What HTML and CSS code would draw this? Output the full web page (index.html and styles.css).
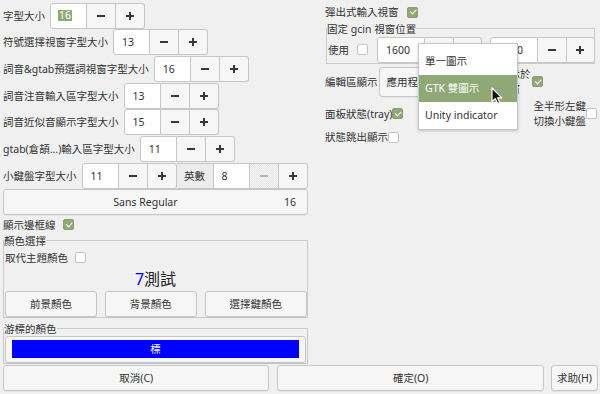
FILE: index.html
```html
<!DOCTYPE html>
<html lang="zh-Hant">

<head>
    <meta charset="UTF-8">
    <meta name="viewport" content="width=device-width, initial-scale=1.0">
    <title>gcin 外觀設定</title>
    <link rel="stylesheet" href="styles.css">
</head>

<body>
    <div class="win">
        <div class="top">
            <div class="left">
                <div class="row"><span class="lbl">字型大小</span>
                    <div class="spin"><div class="entry"><span class="sel">16</span></div><div class="sbtn minus"></div><div class="sbtn plus"></div></div>
                </div>
                <div class="row"><span class="lbl">符號選擇視窗字型大小</span>
                    <div class="spin"><div class="entry">13</div><div class="sbtn minus"></div><div class="sbtn plus"></div></div>
                </div>
                <div class="row"><span class="lbl">詞音&amp;gtab預選詞視窗字型大小</span>
                    <div class="spin"><div class="entry">16</div><div class="sbtn minus"></div><div class="sbtn plus"></div></div>
                </div>
                <div class="row"><span class="lbl">詞音注音輸入區字型大小</span>
                    <div class="spin"><div class="entry">13</div><div class="sbtn minus"></div><div class="sbtn plus"></div></div>
                </div>
                <div class="row"><span class="lbl">詞音近似音顯示字型大小</span>
                    <div class="spin"><div class="entry">15</div><div class="sbtn minus"></div><div class="sbtn plus"></div></div>
                </div>
                <div class="row"><span class="lbl">gtab(倉頡...)輸入區字型大小</span>
                    <div class="spin"><div class="entry">11</div><div class="sbtn minus"></div><div class="sbtn plus"></div></div>
                </div>
                <div class="row"><span class="lbl">小鍵盤字型大小</span>
                    <div class="spin"><div class="entry">11</div><div class="sbtn minus"></div><div class="sbtn plus"></div></div>
                    <div class="tag">英數</div>
                    <div class="spin glued"><div class="entry">8</div><div class="sbtn minus off"></div><div class="sbtn plus"></div></div>
                </div>
                <div class="btn fontbtn"><span class="fname">Sans Regular</span><span class="fsize">16</span></div>
                <div class="check border-row"><span>顯示邊框線</span><span class="chk on"></span></div>

                <fieldset class="frame colors">
                    <legend>顏色選擇</legend>
                    <div class="check theme-row"><span>取代主題顏色</span><span class="chk"></span></div>
                    <div class="sample"><span class="key">7</span>測試</div>
                    <div class="btnrow">
                        <div class="btn">前景顏色</div>
                        <div class="btn">背景顏色</div>
                        <div class="btn">選擇鍵顏色</div>
                    </div>
                </fieldset>

                <fieldset class="frame cursor">
                    <legend>游標的顏色</legend>
                    <div class="btn cursorbtn"><div class="swatch">標</div></div>
                </fieldset>
            </div>

            <div class="right">
                <div class="check popup-row"><span>彈出式輸入視窗</span><span class="chk on"></span></div>

                <fieldset class="frame fixpos">
                    <legend>固定 gcin 視窗位置</legend>
                    <div class="posrow">
                        <span class="use">使用</span><span class="chk"></span>
                        <div class="spin wide"><div class="entry">1600</div><div class="sbtn minus"></div><div class="sbtn plus"></div></div>
                        <div class="spin wide"><div class="entry">1000</div><div class="sbtn minus"></div><div class="sbtn plus"></div></div>
                    </div>
                </fieldset>

                <div class="editrow">
                    <span>編輯區顯示</span>
                    <div class="btn combo">應用程式內</div>
                    <span class="two">游標處顯示於<br>輸入法視窗</span>
                    <span class="chk on"></span>
                </div>

                <div class="trayrow">
                    <div class="check tight"><span>面板狀態(tray)</span><span class="chk on"></span></div>
                    <div class="check tight"><span class="two lines15">全半形左鍵<br>切換小鍵盤</span><span class="chk"></span></div>
                </div>
                <div class="check tight status-row"><span>狀態跳出顯示</span><span class="chk"></span></div>
            </div>
        </div>

        <div class="actions">
            <div class="btn grow">取消(C)</div>
            <div class="btn grow">確定(O)</div>
            <div class="btn help">求助(H)</div>
        </div>

        <div class="menu">
            <div class="item">單一圖示</div>
            <div class="item active">GTK 雙圖示</div>
            <div class="item">Unity indicator</div>
        </div>

        <svg class="pointer" width="13" height="18" viewBox="0 0 13 18">
            <path d="M1 1 L1 14.5 L4.2 11.6 L6.6 16.6 L8.8 15.6 L6.5 10.8 L10.8 10.8 Z" fill="#111" stroke="#fff" stroke-width="1.2" stroke-linejoin="round"/>
        </svg>
    </div>
</body>

</html>
```

FILE: styles.css
```css
* {
    box-sizing: border-box;
    margin: 0;
    padding: 0;
}

body {
    background-color: #f0f0f0;
    color: #323232;
    font-family: "Noto Sans", "Noto Sans CJK TC", sans-serif;
    font-size: 10.5px;
    line-height: 14px;
}

.win {
    position: relative;
    width: 600px;
    height: 394px;
    padding: 2.67px 2px 0 3px;
    overflow: hidden;
}

.top {
    display: flex;
    gap: 17px;
}

.left {
    width: 305px;
    display: flex;
    flex-direction: column;
}

.right {
    width: 272px;
    display: flex;
    flex-direction: column;
}

/* spin buttons */
.row {
    display: flex;
    align-items: center;
    height: 26px;
    margin-bottom: 0.67px;
}

.row .lbl {
    margin-right: 5px;
    white-space: nowrap;
}

.spin {
    display: flex;
    flex: none;
    height: 26px;
}

.entry {
    width: 37px;
    display: flex;
    align-items: center;
    padding-left: 8px;
    background: #fff;
    border: 1px solid #c6c6c6;
    border-radius: 3px 0 0 3px;
}

.sel {
    margin-left: -1px;
    padding: 0 1px;
    line-height: 11px;
    color: #fff;
    background: #8fa876;
}

.sbtn {
    width: 29px;
    border: 1px solid #c6c6c6;
    border-left: 0;
}

.sbtn:last-child {
    border-radius: 0 3px 3px 0;
}

.minus {
    background: linear-gradient(#383838, #383838) center / 8px 2px no-repeat, #f6f6f6;
}

.plus {
    background: linear-gradient(#383838, #383838) center / 8px 2px no-repeat,
        linear-gradient(#383838, #383838) center / 2px 8px no-repeat, #f6f6f6;
}

.minus.off {
    background: linear-gradient(#b4b4b4, #b4b4b4) center / 8px 2px no-repeat,
        repeating-conic-gradient(#e6e6e6 0 25%, #f7f7f7 0 50%) 0 0 / 2px 2px;
}

.tag {
    width: 36px;
    height: 26px;
    display: flex;
    align-items: center;
    justify-content: center;
    background: #ececec;
    border-top: 1px solid #c6c6c6;
    border-bottom: 1px solid #c6c6c6;
}

.glued .entry {
    border-radius: 0;
}

.wide .entry {
    width: 48px;
}

.wide .sbtn {
    width: 28.5px;
}

/* buttons */
.btn {
    display: flex;
    align-items: center;
    justify-content: center;
    white-space: nowrap;
    background: #f6f6f6;
    border: 1px solid #c6c6c6;
    border-radius: 3px;
    box-shadow: 0 1px 0 rgba(0, 0, 0, 0.04);
}

.fontbtn {
    height: 26px;
    padding: 0 11px 0 8px;
}

.fname {
    flex: 1;
    text-align: center;
}

.fsize {
    margin-left: 5px;
}

/* check boxes */
.check {
    display: flex;
    align-items: center;
    gap: 7px;
    white-space: nowrap;
}

.check.tight {
    gap: 0;
}

.chk {
    position: relative;
    flex: none;
    width: 11px;
    height: 11px;
    background: #fff;
    border: 1px solid #c4c4c4;
    border-radius: 2px;
}

.chk.on {
    background: #8fa876;
    border-color: #86a06c;
}

.chk.on::after {
    content: "";
    position: absolute;
    left: 2px;
    top: 1.5px;
    width: 5px;
    height: 2.5px;
    border-left: 1.6px solid #fff;
    border-bottom: 1.6px solid #fff;
    transform: rotate(-45deg);
}

.border-row {
    height: 18.6px;
}

/* frames */
.frame {
    min-width: 0;
    border: 1px solid #cacaca;
}

.frame legend {
    padding: 0;
    line-height: 14px;
}

.theme-row {
    height: 20px;
    padding-left: 1px;
}

.sample {
    height: 22px;
    line-height: 22px;
    font-size: 16px;
    text-align: center;
    color: #222;
}

.sample .key {
    color: #0000ff;
}

.btnrow {
    display: flex;
    gap: 8px;
    height: 26px;
    margin: 1px 0 0 1px;
}

.btnrow .btn {
    flex: 1 1 auto;
}

.cursor {
    margin-top: 4px;
}

.cursorbtn {
    height: 27px;
    margin: 0 1px;
    padding: 4px 6px 4px 6px;
}

.swatch {
    flex: 1;
    height: 18px;
    line-height: 18px;
    text-align: center;
    color: #fff;
    background: #0000ff;
}

/* right column */
.popup-row {
    height: 19.33px;
    gap: 8px;
}

.fixpos {
    margin-left: 1px;
    width: 269px;
}

.posrow {
    display: flex;
    align-items: center;
    margin-top: 1px;
    padding-left: 1px;
    white-space: nowrap;
}

.use {
    flex: none;
    margin-right: 8px;
}

.posrow .chk {
    margin-right: 9px;
}

.posrow .spin + .spin {
    margin-left: 8px;
}

.editrow {
    display: flex;
    align-items: center;
    height: 30px;
    margin-top: 3px;
    white-space: nowrap;
}

.combo {
    flex: none;
    width: 87px;
    height: 30px;
    margin-left: 1px;
    justify-content: flex-start;
    padding-left: 7px;
}

.two {
    line-height: 14.5px;
}

.editrow .two {
    margin: 0 1px 0 2px;
}

.lines15 {
    line-height: 15px;
}

.trayrow {
    display: flex;
    align-items: center;
    justify-content: space-between;
    height: 30px;
    margin-top: 2px;
}

.status-row {
    height: 17px;
}

/* dialog buttons */
.actions {
    display: flex;
    gap: 8px;
    height: 26px;
    margin-top: 1px;
}

.actions .grow {
    flex: 1;
}

.actions .help {
    margin-left: -1px;
    padding: 0 5px;
}

/* popup menu of the combo */
.menu {
    position: absolute;
    left: 418px;
    top: 43px;
    width: 100px;
    padding-top: 4px;
    background: #fff;
    border: 1px solid #c8c8c8;
    box-shadow: 0 1px 3px rgba(0, 0, 0, 0.2);
}

.item {
    height: 27px;
    line-height: 27px;
    padding-left: 6px;
    white-space: nowrap;
}

.item.active {
    color: #fff;
    background: #8fa876;
}

.pointer {
    position: absolute;
    left: 491px;
    top: 87px;
}
```
